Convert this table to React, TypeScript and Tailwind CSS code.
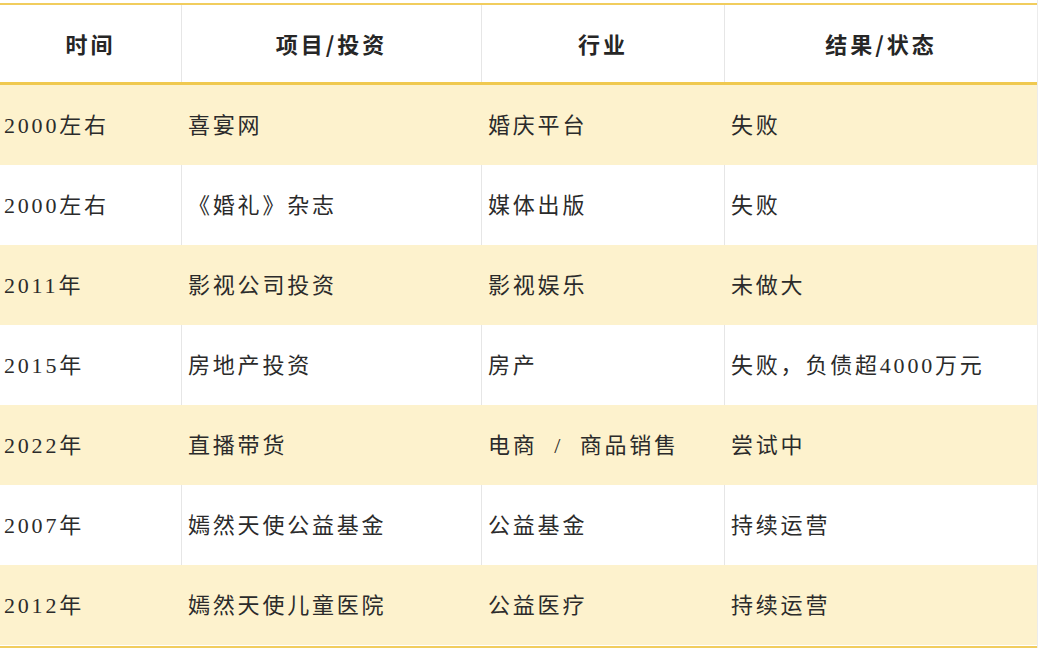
import React from "react";

const rows: [string, string, string, string][] = [
  ["2000左右", "喜宴网", "婚庆平台", "失败"],
  ["2000左右", "《婚礼》杂志", "媒体出版", "失败"],
  ["2011年", "影视公司投资", "影视娱乐", "未做大"],
  ["2015年", "房地产投资", "房产", "失败，负债超4000万元"],
  ["2022年", "直播带货", "电商  /  商品销售", "尝试中"],
  ["2007年", "嫣然天使公益基金", "公益基金", "持续运营"],
  ["2012年", "嫣然天使儿童医院", "公益医疗", "持续运营"],
];

const widths = ["w-[182px]", "w-[300px]", "w-[243px]", "w-[312px]"];

export default function App() {
  return (
    <div className="w-[1042px] h-[648px] bg-white overflow-hidden">
      <div className="flex">
        <div className="w-[1037px] mt-[3px] border-t-2 border-b-2 border-[#f1cd5e]">
          <div className="flex h-[80px] border-b-[3px] border-[#f0c94f] bg-white">
            {["时间", "项目/投资", "行业", "结果/状态"].map((h, i) => (
              <div
                key={h}
                className={`${widths[i]} flex items-center justify-center ${i < 3 ? "border-r border-[#e6e6e6]" : ""} text-[22px] font-bold tracking-[3px] text-[#262626]`}
                style={{ fontFamily: '"Noto Sans CJK SC", "Noto Sans", sans-serif' }}
              >
                {h}
              </div>
            ))}
          </div>
          {rows.map((r, ri) => {
            const yellow = ri % 2 === 0;
            return (
              <div key={ri} className={`flex h-[80px] ${yellow ? "bg-[#fdf2cd]" : "bg-white"}`}>
                {r.map((c, ci) => (
                  <div
                    key={ci}
                    className={`${widths[ci]} flex items-center ${ci === 0 ? "pl-[4px]" : "pl-[6px]"} ${ci < 3 ? (yellow ? "border-r border-transparent" : "border-r border-[#e6e6e6]") : ""} text-[22px] tracking-[2.8px] text-[#2b2b2b] whitespace-pre`}
                    style={{ fontFamily: '"Liberation Serif", "Noto Sans CJK SC", serif' }}
                  >
                    {c}
                  </div>
                ))}
              </div>
            );
          })}
        </div>
        <div className="w-[5px] h-[648px] border-l border-[#ececec]"></div>
      </div>
    </div>
  );
}
